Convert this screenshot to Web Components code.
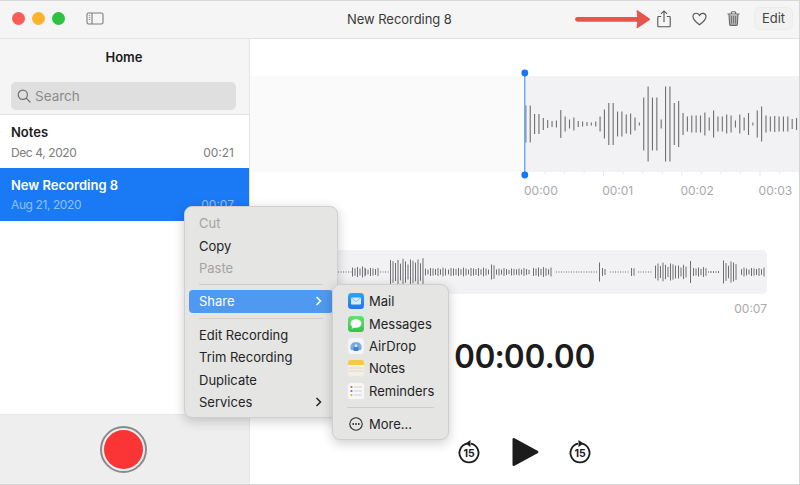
<!DOCTYPE html>
<html>
<head>
<meta charset="utf-8">
<title>Voice Memos</title>
<style>
  html, body { margin: 0; padding: 0; background: #fff; }
  body { font-family: Inter, "Liberation Sans", sans-serif; font-size: 13px; color: #222; width: 800px; height: 485px; overflow: hidden; }
</style>
</head>
<body>
<app-window>
  <title-bar heading="New Recording 8"></title-bar>
  <div style="display:flex;flex:1;min-height:0">
    <side-bar>
      <recording-row name="Notes" date="Dec 4, 2020" length="00:21"></recording-row>
      <recording-row name="New Recording 8" date="Aug 21, 2020" length="00:07" selected></recording-row>
    </side-bar>
    <main-pane></main-pane>
  </div>
  <context-menu style="left:184px;top:205px;width:154px">
    <menu-item disabled>Cut</menu-item>
    <menu-item>Copy</menu-item>
    <menu-item disabled>Paste</menu-item>
    <menu-sep></menu-sep>
    <menu-item active arrow>Share</menu-item>
    <menu-sep></menu-sep>
    <menu-item>Edit Recording</menu-item>
    <menu-item>Trim Recording</menu-item>
    <menu-item>Duplicate</menu-item>
    <menu-item arrow>Services</menu-item>
  </context-menu>
  <context-menu style="left:332px;top:283px;width:117px">
    <menu-item icon="mail">Mail</menu-item>
    <menu-item icon="messages">Messages</menu-item>
    <menu-item icon="airdrop">AirDrop</menu-item>
    <menu-item icon="notes">Notes</menu-item>
    <menu-item icon="reminders">Reminders</menu-item>
    <menu-sep></menu-sep>
    <menu-item icon="more">More...</menu-item>
  </context-menu>
</app-window>

<script>
class AppWindow extends HTMLElement {
  constructor() {
    super();
    this.attachShadow({ mode: 'open' });
    this.shadowRoot.innerHTML = `
      <style>
        :host { display: flex; flex-direction: column; position: relative; width: 800px; height: 485px; box-sizing: border-box;
          border-right: 1px solid #d6d6d6; border-bottom: 1px solid #d6d6d6; border-top: 1px solid #d8d8d8; overflow: hidden; background: #fff; }
      </style>
      <slot></slot>`;
  }
}

class TitleBar extends HTMLElement {
  constructor() {
    super();
    this.attachShadow({ mode: 'open' });
    const heading = this.getAttribute('heading') || '';
    this.shadowRoot.innerHTML = `
      <style>
        :host { display: flex; align-items: center; height: 38px; box-sizing: border-box; flex: none; background: #f5f5f5; border-bottom: 1px solid #e2e2e2; position: relative; padding: 0 7px 2px 12px; }
        .light { width: 13px; height: 13px; border-radius: 50%; margin-right: 7px; flex: none; }
        .side { margin-left: 14px; display: block; }
        .title { margin-left: 243px; color: #3a3a3a; font-size: 13px; width: 106px; white-space: nowrap; letter-spacing: -.05px; }
        .tools { margin-left: auto; display: flex; align-items: center; }
        .tools svg { display: block; }
        .edit { margin-left: 15px; width: 37px; height: 21px; line-height: 21px; text-align: center; box-sizing: border-box; background: #f1f1f1; border-radius: 5px; color: #444; font-size: 13px; box-shadow: 0 0 0 1px #ececec; }
        .arrow { position: absolute; left: 574px; top: 6px; }
      </style>
      <span class="light" style="background:#fb5c57"></span>
      <span class="light" style="background:#fdb32c"></span>
      <span class="light" style="background:#2dc240"></span>
      <svg class="side" width="18" height="13" viewBox="0 0 18 13" fill="none" stroke="#7c7c7c" stroke-width="1.1">
        <rect x="1" y="1" width="16" height="11" rx="1.6"/><path d="M6 1v11"/><path d="M2.8 3.5h1.4M2.8 5.5h1.4M2.8 7.5h1.4" stroke-width=".8"/>
      </svg>
      <span class="title">${heading}</span>
      <div class="tools">
        <svg width="14" height="18" viewBox="0 0 14 18" fill="none" stroke="#555" stroke-width="1.1" style="margin-right:21px">
          <path d="M4.2 6.5H1.6a.8.8 0 0 0-.8.8v8.6c0 .5.4.9.8.9h10.8c.5 0 .8-.4.8-.9V7.300a.8.8 0 0 0-.8-.8H9.800"/>
          <path d="M7 12V1M4 3.800 7 .9l3 2.900"/>
        </svg>
        <svg width="15" height="14" viewBox="0 0 15 14" fill="none" stroke="#555" stroke-width="1.15" style="margin-right:20px">
          <path d="M7.500 12.800C3.800 10 1 7.700 1 4.700 1 2.700 2.500 1.300 4.200 1.300c1.400 0 2.600.8 3.300 2.100.7-1.300 1.900-2.100 3.300-2.100C12.500 1.300 14 2.700 14 4.700c0 3-2.800 5.300-6.500 8.100z"/>
        </svg>
        <svg width="13" height="15" viewBox="0 0 13 15" fill="none" stroke="#666" stroke-width="1.1">
          <path d="M.5 3h12M4.300 3V1.800c0-.6.400-1 1-1h2.400c.6 0 1 .4 1 1V3"/>
          <path d="M2 3l.6 10.200c0 .7.500 1.200 1.200 1.200h5.400c.7 0 1.200-.5 1.200-1.200L11 3" fill="#b4b4b4"/>
          <path d="M4.500 5v7.500M6.500 5v7.500M8.500 5v7.500" stroke-width=".8"/>
        </svg>
        <span class="edit">Edit</span>
      </div>
      <svg class="arrow" width="78" height="24" viewBox="0 0 78 24">
        <path d="M3.500 12.300h60" stroke="#e9534c" stroke-width="4.800" stroke-linecap="round"/>
        <path d="M63 3.500 76 12.300 63 21c1-6 1-11.500 0-17.500z" fill="#e9534c" stroke="#e9534c" stroke-linejoin="round"/>
      </svg>`;
  }
}

class SideBar extends HTMLElement {
  constructor() {
    super();
    this.attachShadow({ mode: 'open' });
    this.shadowRoot.innerHTML = `
      <style>
        :host { display: flex; flex-direction: column; width: 250px; flex: none; box-sizing: border-box; border-right: 1px solid #e5e5e5; background: #f5f5f5; }
        .head { height: 76px; flex: none; box-sizing: border-box; padding: 10px 12px 0 11px; border-bottom: 1px solid #e2e2e2; }
        h1 { margin: 0; font-size: 13px; font-weight: 600; text-align: center; color: #1d1d1d; line-height: 16px; }
        .search { margin-top: 17px; height: 28px; width: 225px; border-radius: 5px; background: #dfdfdf; display: flex; align-items: center; padding-left: 6px; box-sizing: border-box; color: #8b8b8b; font-size: 13.500px; }
        .search svg { margin-right: 4px; }
        .list { flex: 1; background: #fff; }
        .foot { height: 70px; flex: none; background: #eeeeee; border-top: 1px solid #e8e8e8; display: flex; align-items: center; justify-content: center; box-sizing: border-box; }
        .rec { width: 47px; height: 47px; box-sizing: border-box; border: 2.500px solid #8a8a8e; border-radius: 50%; padding: 2px; margin-left: -3px; }
        .rec span { display: block; width: 100%; height: 100%; border-radius: 50%; background: #fb3535; }
      </style>
      <div class="head">
        <h1>Home</h1>
        <div class="search">
          <svg width="14" height="14" viewBox="0 0 14 14" fill="none" stroke="#6e6e6e" stroke-width="1.200"><circle cx="5.800" cy="5.800" r="4.600"/><path d="M9.200 9.200 13 13" stroke-linecap="round"/></svg>
          Search
        </div>
      </div>
      <div class="list"><slot></slot></div>
      <div class="foot"><div class="rec"><span></span></div></div>`;
  }
}

class RecordingRow extends HTMLElement {
  constructor() {
    super();
    this.attachShadow({ mode: 'open' });
    this.shadowRoot.innerHTML = `
      <style>
        :host { display: block; height: 53px; box-sizing: border-box; padding: 9px 15px 0 11px; background: #fff; }
        :host([selected]) { background: #1a7af5; }
        .name { font-size: 13px; font-weight: 600; line-height: 16px; color: #1c1c1c; }
        .meta { display: flex; justify-content: space-between; margin-top: 5px; font-size: 12px; line-height: 15px; color: #7d7d7d; }
        .meta span:first-child { letter-spacing: -.4px; }
        :host([selected]) .name { color: #fff; }
        :host([selected]) .meta { color: #8fc0fb; margin-top: 4px; }
      </style>
      <div class="name">${this.getAttribute('name')}</div>
      <div class="meta"><span>${this.getAttribute('date')}</span><span>${this.getAttribute('length')}</span></div>`;
  }
}

// bar heights read off the recording, in pixels
const OVERVIEW = [37,37,20,20,12,8,6,7,28,15,9,13,6,5,4,3,5,15,29,42,42,25,25,19,21,13,3,53,75,53,53,9,75,75,42,46,22,15,17,17,17,23,13,27,15,15,19,17,7,19,13,22,3,27,35,17,15,16,15,15,15,10,12];

// [from, to, height] in px from where the detail band comes out from under the menu
const DETAIL = [[0,13,1],[14,27,10],[27,42,8],[42,52,1],[52,67,24],[67,85,25],[87,108,8],[110,152,8],[153,158,15],[158,192,7],[195,215,9],[218,259,1],[261,263,19],[264,269,7],[272,292,1],[293,298,8],[300,315,1],[317,338,17],[340,350,13],[352,354,22],[355,368,9],[370,382,2],[385,400,21],[403,427,8]];

class WaveOverview extends HTMLElement {
  constructor() {
    super();
    this.attachShadow({ mode: 'open' });
    let bars = '';
    OVERVIEW.forEach((h, i) => {
      const x = 275.300 + i * 4.366;
      if (x < 549) bars += `<rect x="${x.toFixed(2)}" y="${(55 - h / 2).toFixed(1)}" width="1.100" height="${h}" fill="#6f6f72"/>`;
    });
    let ticks = '';
    for (let i = 0; i < 15; i++) {
      const x = 275 + i * 19.550;
      ticks += `<rect x="${x}" y="103" width=".8" height="${i % 4 ? 2 : 4}" fill="#e4e4e4"/>`;
    }
    this.shadowRoot.innerHTML = `
      <style>
        :host { display: block; margin-top: 30px; }
        svg { display: block; }
        .labels { display: flex; padding-left: 274px; margin-top: 4px; color: #a9a9ab; font-size: 12px; line-height: 16px; white-space: nowrap; }
        .labels span { width: 78.200px; flex: none; }
      </style>
      <svg width="549" height="110" viewBox="0 0 549 110">
        <rect x="0" y="7" width="275" height="96" fill="#fafafa"/>
        <rect x="275" y="7" width="274" height="96" fill="#f2f2f4"/>
        ${ticks}${bars}
        <rect x="274" y="4" width="1.500" height="102" fill="#6aaef8"/>
        <circle cx="274.800" cy="4" r="3.400" fill="#1677f2"/>
        <circle cx="274.800" cy="106" r="3.400" fill="#1677f2"/>
      </svg>
      <div class="labels"><span>00:00</span><span>00:01</span><span>00:02</span><span>00:03</span></div>`;
  }
}

class WaveDetail extends HTMLElement {
  constructor() {
    super();
    this.attachShadow({ mode: 'open' });
    let bars = '';
    const jitter = [1, .7, 1.1, .85, .6, 1, .9, .75];
    DETAIL.forEach(([a, b, h]) => {
      for (let x = a; x < b; x += 2.500) {
        const v = h <= 1 ? 1 : Math.max(1, h * jitter[Math.round(x / 2.500) % 8]);
        bars += `<rect x="${(x + 66).toFixed(1)}" y="${(22 - v / 2).toFixed(1)}" width="1" height="${v.toFixed(1)}" fill="#6f6f72"/>`;
      }
    });
    this.shadowRoot.innerHTML = `
      <style>
        :host { display: block; margin: 51px 32px 0 22px; }
        svg { display: block; }
        .len { text-align: right; color: #a9a9ab; font-size: 12px; line-height: 16px; margin-top: 7px; }
      </style>
      <svg width="495" height="44" viewBox="0 0 495 44">
        <rect width="495" height="44" rx="5" fill="#f2f2f4"/>${bars}
      </svg>
      <div class="len">00:07</div>`;
  }
}

class MainPane extends HTMLElement {
  constructor() {
    super();
    this.attachShadow({ mode: 'open' });
    const skip = (flip) => `
      <svg width="26" height="28" viewBox="0 0 26 28" fill="none" stroke="#1c1c1c">
        <g ${flip ? 'transform="matrix(-1 0 0 1 26 0)"' : ''}>
          <path d="M11 5.600a9.500 9.500 0 1 0 4 0" stroke-width="1.800" fill="none"/>
          <path d="M14.500 2 9.500 5.500l5 3.500z" fill="#1c1c1c" stroke="none"/>
        </g>
      </svg>`;
    this.shadowRoot.innerHTML = `
      <style>
        :host { display: block; flex: 1; min-width: 0; background: #fff; }
        .clock { text-align: center; font-size: 32.500px; font-weight: 600; line-height: 42px; color: #1c1c1c; margin-top: 19px; font-variant-numeric: tabular-nums; letter-spacing: -.3px; }
        .transport { display: flex; justify-content: center; align-items: center; gap: 28px; margin-top: 59px; }
        .skip { position: relative; display: block; width: 26px; height: 28px; }
        .skip b { position: absolute; left: 0; right: 0; top: 9.500px; text-align: center; font-size: 10.500px; font-weight: 700; line-height: 12px; color: #1c1c1c; }
        svg { display: block; }
      </style>
      <wave-overview></wave-overview>
      <wave-detail></wave-detail>
      <div class="clock">00:00.00</div>
      <div class="transport">
        <span class="skip">${skip(false)}<b>15</b></span>
        <svg width="29" height="30" viewBox="0 0 29 30"><path d="M2.500 2.500v25c0 1.300 1 1.800 2 1.300L27.500 16.300c1.200-.7 1.200-1.900 0-2.600L4.500 1.200c-1-.5-2 0-2 1.300z" fill="#1c1c1c"/></svg>
        <span class="skip">${skip(true)}<b>15</b></span>
      </div>`;
  }
}

class ContextMenu extends HTMLElement {
  constructor() {
    super();
    this.attachShadow({ mode: 'open' });
    this.shadowRoot.innerHTML = `
      <style>
        :host { display: block; position: absolute; box-sizing: border-box; padding: 5px 4px 3.500px; border-radius: 8px; background: #e5e5e4; border: 1px solid #cfcfcf;
          box-shadow: 0 3px 12px rgba(0,0,0,.2); z-index: 2; }
      </style>
      <slot></slot>`;
  }
}

const ICONS = {
  mail: `<defs><linearGradient id="m" x1="0" y1="0" x2="0" y2="1"><stop offset="0" stop-color="#2aa6f5"/><stop offset="1" stop-color="#1c78ee"/></linearGradient></defs><rect width="16" height="16" rx="3.500" fill="url(#m)"/><rect x="3" y="4.500" width="10" height="7" rx="1" fill="#dcebfb"/><path d="M3.500 5 8 8.500 12.500 5" fill="none" stroke="#7db4ee" stroke-width=".8"/>`,
  messages: `<defs><linearGradient id="g" x1="0" y1="0" x2="0" y2="1"><stop offset="0" stop-color="#6ae070"/><stop offset="1" stop-color="#2fc44a"/></linearGradient></defs><rect width="16" height="16" rx="3.500" fill="url(#g)"/><ellipse cx="8" cy="7.500" rx="5.500" ry="4.300" fill="#fff"/><path d="M4.500 10 3.500 13 7 11z" fill="#fff"/>`,
  airdrop: `<rect width="16" height="16" rx="3.500" fill="#f3f5f8"/><path d="M3 12a5.600 5.600 0 1 1 10 0z" fill="#7aa8e4"/><path d="M5.800 13a2.800 2.800 0 1 1 4.400 0z" fill="#3f7fd8"/><circle cx="8" cy="7.800" r="1.300" fill="#e8f0fb"/>`,
  notes: `<rect width="16" height="16" rx="2.500" fill="#f3efe4"/><path d="M0 2.500A2.500 2.500 0 0 1 2.500 0h11A2.500 2.500 0 0 1 16 2.500V5H0z" fill="#f6c945"/><path d="M1 8h14M1 11h14" stroke="#d8d3c6" stroke-width=".8"/>`,
  reminders: `<rect width="16" height="16" rx="2.500" fill="#f8f8f8"/><circle cx="3.500" cy="4" r="1.100" fill="#e2574c"/><circle cx="3.500" cy="8" r="1.100" fill="#3d7fe0"/><circle cx="3.500" cy="12" r="1.100" fill="#f0a030"/><path d="M6 4h8M6 8h8M6 12h8" stroke="#ccc" stroke-width=".9"/>`,
  more: `<circle cx="8" cy="8" r="6.200" fill="none" stroke="#2a2a2a" stroke-width="1.100"/><circle cx="5.200" cy="8" r=".9" fill="#2a2a2a"/><circle cx="8" cy="8" r=".9" fill="#2a2a2a"/><circle cx="10.800" cy="8" r=".9" fill="#2a2a2a"/>`,
};

class MenuItem extends HTMLElement {
  constructor() {
    super();
    this.attachShadow({ mode: 'open' });
    const icon = this.getAttribute('icon');
    this.shadowRoot.innerHTML = `
      <style>
        :host { display: flex; align-items: center; height: 22.400px; padding: 0 10px; border-radius: 4px; font-size: 13px; color: #242424; white-space: nowrap; }
        :host([icon]) { padding-left: 11px; }
        :host([disabled]) { color: #a3a3a3; }
        :host([active]) { background: #4f9af0; color: #fff; }
        svg.icon { margin-right: 5px; flex: none; display: block; }
        svg.chev { margin-left: auto; margin-right: 1px; display: block; }
      </style>
      ${icon ? `<svg class="icon" width="16" height="16" viewBox="0 0 16 16">${ICONS[icon]}</svg>` : ''}
      <slot></slot>
      ${this.hasAttribute('arrow') ? `<svg class="chev" width="7" height="10" viewBox="0 0 7 10" fill="none" stroke="currentColor" stroke-width="1.500"><path d="M1.500 1 5.500 5l-4 4"/></svg>` : ''}`;
  }
}

class MenuSep extends HTMLElement {
  constructor() {
    super();
    this.attachShadow({ mode: 'open' });
    this.shadowRoot.innerHTML = `<style>:host { display: block; height: 1px; margin: 5px 10px 5px; background: #cdcdcd; }</style>`;
  }
}

customElements.define('app-window', AppWindow);
customElements.define('title-bar', TitleBar);
customElements.define('side-bar', SideBar);
customElements.define('recording-row', RecordingRow);
customElements.define('wave-overview', WaveOverview);
customElements.define('wave-detail', WaveDetail);
customElements.define('main-pane', MainPane);
customElements.define('context-menu', ContextMenu);
customElements.define('menu-item', MenuItem);
customElements.define('menu-sep', MenuSep);
</script>
</body>
</html>
